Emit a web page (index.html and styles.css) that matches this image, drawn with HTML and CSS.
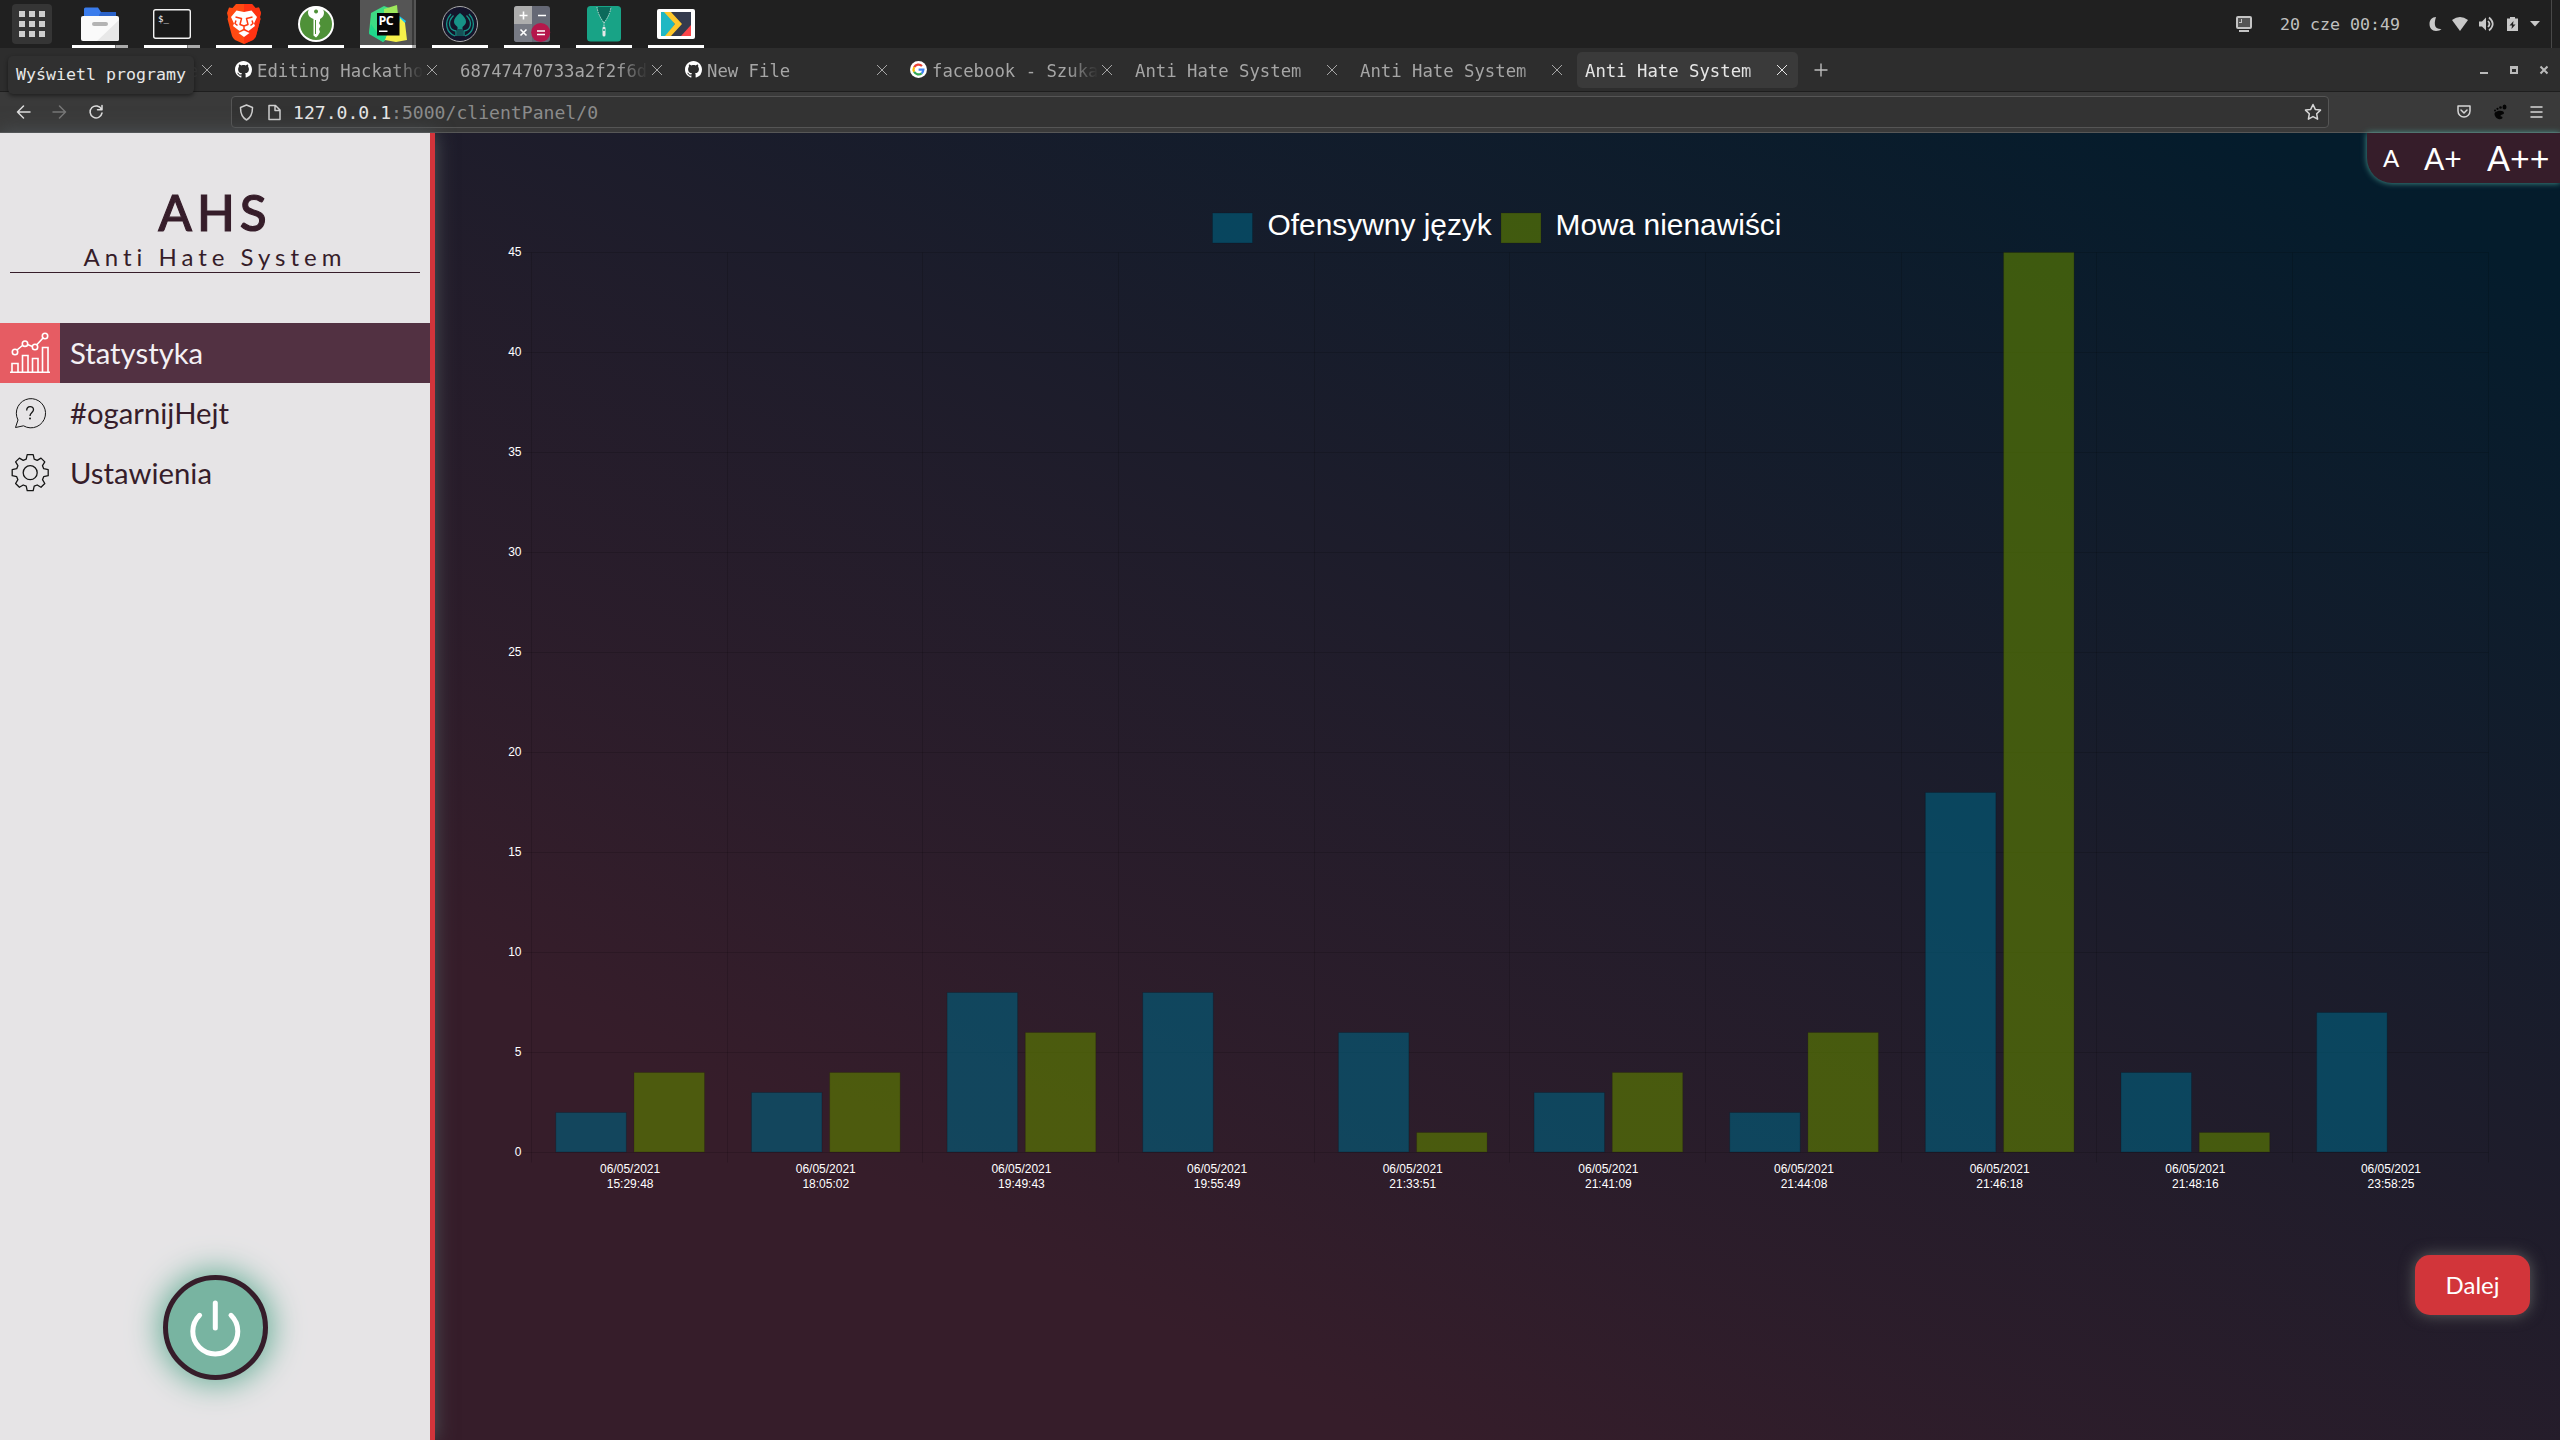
FILE: index.html
```html
<!DOCTYPE html>
<html lang="pl">
<head>
<meta charset="utf-8">
<title>Anti Hate System</title>
<link rel="stylesheet" href="styles.css">
</head>
<body>
<header class="panel">
  <div class="apps"><svg width="40" height="40" viewBox="0 0 40 40"><path fill="#cfcfcf" d="M7 7h6v6H7zM17 7h6v6h-6zM27 7h6v6h-6zM7 17h6v6H7zM17 17h6v6h-6zM27 17h6v6h-6zM7 27h6v6H7zM17 27h6v6h-6zM27 27h6v6h-6z"/></svg></div>
  <nav class="dock">
    <div class="dock-item multi"><svg viewBox="0 0 56 48"><path fill="#3a7cec" d="M12 18V9q0-1.500 1.500-1.500H26l3 4.500h13q2 0 2 2v4z"/><path fill="#2a62c8" d="M27 15l2-3h15v4H27z"/><rect x="9" y="16" width="38" height="25" rx="2" fill="#fafafa"/><path fill="#e8e8e8" d="M47 20v19q0 2-2 2H25z"/><rect x="20" y="22" width="16" height="4" rx="2" fill="#b4b4b4"/></svg></div>
    <div class="dock-item multi"><svg viewBox="0 0 56 48"><rect x="9.700" y="9.700" width="36.600" height="28.600" rx="2" fill="#191919" stroke="#f2f2f2" stroke-width="1.400"/><text x="14" y="21.500" class="prompt">$_</text></svg></div>
    <div class="dock-item"><svg viewBox="0 0 56 48"><path fill="#ff4a12" d="M20 4h16l3.500 4 3.500-.5L45 13l-1 4 .5 2-4.500 17q-1 2.500-3 4L28 44l-9-4q-2-1.500-3-4L11.500 19l.5-2-1-4 2-5.500 3.500.5z"/><path fill="#ff2a12" d="M28 4h8l3.500 4 3.500-.5L45 13l-1 4 .5 2-4.500 17q-1 2.500-3 4L28 44z" opacity=".7"/><path fill="#fff" d="M20.500 10.500L28 12l7.500-1.500L41 17l-3 6.500 1 2.500-6.500 5L28 28.500 23.500 31 17 26l1-2.500-3-6.500zM28 30.500l5.500 2.500-5.500 4-5.500-4z"/><path fill="none" stroke="#ff3c12" stroke-width="1.500" stroke-linejoin="round" d="M19.500 17l6 1.500L24 24.500l4 1.500 4-1.500-1.500-6 6-1.500M28 26v3M20 20.500l-1 3 2.500 2M36 20.500l1 3-2.500 2"/></svg></div>
    <div class="dock-item"><svg viewBox="0 0 56 48"><circle cx="28" cy="24" r="18" fill="#fff"/><circle cx="28" cy="24" r="16" fill="#4f9138"/><path fill="#fff" fill-rule="evenodd" d="M28 6.500c5 0 8 2.500 8 6.500 0 3-2 5-4 6v2l-1 2 1.500 3-1.500 3 1 3-2 3.500-2 2-2.500-2V19c-3-1-5.500-3-5.500-6 0-4 3-6.500 8-6.500zm0 3a2 2 0 1 0 .1 0z"/><path stroke="#4f9138" d="M27.500 20v14"/></svg></div>
    <div class="dock-item current"><svg viewBox="0 0 56 48"><path fill="#3ddc84" d="M11 13L24 6l8 3v26l-9 7-14-9z"/><path fill="#9ee85c" d="M24 9l13-4 1 10-14 8z"/><path fill="#16c8f0" d="M38 15l8 6-4 7-5-2z"/><path fill="#f5f04a" d="M40 18l5 5 2 17-11 2-11-2 3-8 10-3z"/><path fill="#1fd68b" d="M11 24l7 10 8 3-3 5-14-8z"/><rect x="17" y="13" width="22.500" height="22.500" fill="#060606"/><text x="18.500" y="25" class="pc">PC</text><path fill="#fff" d="M19 30.500h8.500V32H19z"/></svg></div>
    <div class="dock-item"><svg viewBox="0 0 56 48"><circle cx="28" cy="24" r="17.500" fill="#14142a" stroke="#a9a9a9"/><path fill="#179287" d="M28 13c4 3 6 6 6 8.500 0 1.500-.5 3-3.500 5.500V36h-1v-7h-1v7h-1v-7h-1v7h-1v-9c-3-2.500-3.500-4-3.500-5.500 0-2.500 2-5.500 6-8.500z"/><path fill="none" stroke="#179287" stroke-width="1.300" d="M19 14C11 23 15 33 23 36M21.500 15.500C15 22 17 30 24 31v5M37 14C45 23 41 33 33 36M34.500 15.500C41 22 39 30 32 31v5"/></svg></div>
    <div class="dock-item"><svg viewBox="0 0 56 48"><rect x="10" y="6" width="36" height="36" rx="3" fill="#656875"/><path fill="#adadad" d="M13 6h15v18H10V9q0-3 3-3z"/><path fill="#777a84" d="M10 24h18v18H13q-3 0-3-3z"/><circle cx="36.700" cy="32.500" r="9.500" fill="#b5174b"/><path stroke="#fff" stroke-width="1.600" d="M15.500 15.500h8M19.500 11.500v8M34 15.500h8M16.500 29.500l6 6M22.500 29.500l-6 6M33 31h8M33 34.500h8"/></svg></div>
    <div class="dock-item"><svg viewBox="0 0 56 48"><rect x="11" y="6" width="34" height="35.500" rx="3.500" fill="#18a386"/><path fill="#0c6a5a" d="M21 7h14q-1 8-7 15-6-7-7-15z"/><path fill="none" stroke="#c8d8d4" stroke-dasharray="1.500 1" d="M21 7q1 8 7 16 6-8 7-16M28 22v6"/><path stroke="#e8e8e8" stroke-width="3" stroke-linecap="round" d="M28 28v7"/><circle cx="28" cy="30" r="1" fill="#18a386"/></svg></div>
    <div class="dock-item"><svg viewBox="0 0 56 48"><rect x="9" y="9" width="38" height="30" rx="2" fill="#fff"/><path fill="#353b4d" d="M13 12h30v24H13z"/><path fill="#20b8c3" d="M13 12h5l9 12-9 12h-5z"/><path fill="#ffc72c" d="M16 12h7l11 12-11 12h-6l10-12z"/><path fill="#fb4549" d="M43 25v11H33z"/></svg></div>
  </nav>
  <div class="tray">
    <svg width="16" height="16" viewBox="0 0 16 16"><rect x="1" y="1" width="14" height="11" rx="1" fill="#555" stroke="#c4c4c4" stroke-width="2"/><path fill="#c4c4c4" d="M3 7V6h2V3h1v4zM3 14h10v2H3z"/></svg>
    <span class="clock">20 cze 00:49</span>
    <svg class="moon" width="13" height="16" viewBox="0 0 13 16"><path fill="#c8c8c8" d="M7 1C3 1 .5 4 .5 8S3 15 7 15c2.500 0 4.500-1 5.500-2C7 13.500 4 10 7 1z"/></svg>
    <svg class="wifi" width="16" height="16" viewBox="0 0 16 16"><path fill="#c8c8c8" d="M8 15L0 4q8-6 16 0z"/></svg>
    <svg class="volume" width="16" height="16" viewBox="0 0 16 16"><path fill="#c8c8c8" d="M0 5.500h3l4-4v13l-4-4H0z"/><path fill="none" stroke="#c8c8c8" stroke-width="1.700" d="M9 5q3 3 0 6M10 1.500q7.500 6.500 0 13"/></svg>
    <svg class="battery" width="11" height="16" viewBox="0 0 11 16"><path fill="#c8c8c8" d="M3 1h5v1.500h3V15H0V2.500h3z"/><path fill="#222" d="M6.500 5L2.500 9.500h2.500L4.500 13l4-4.500H6z"/></svg>
    <svg class="caret" width="10" height="6" viewBox="0 0 10 6"><path fill="#c8c8c8" d="M0 0h10L5 5.500z"/></svg>
    <i class="edge"></i>
  </div>
</header>

<div class="tabs">
  <div class="tab first"><span class="label">er</span><i class="x"></i></div>
  <div class="tab"><svg class="fav" width="17" height="17" viewBox="0 0 16 16"><use href="#github"/></svg><span class="label">Editing Hackathon</span><i class="x"></i></div>
  <div class="tab"><span class="label">68747470733a2f2f6d6</span><i class="x"></i></div>
  <div class="tab"><svg class="fav" width="17" height="17" viewBox="0 0 16 16"><path id="github" fill="#fff" d="M8 0C3.580 0 0 3.580 0 8c0 3.540 2.290 6.530 5.470 7.590.4.070.55-.17.55-.38 0-.19-.01-.82-.01-1.490-2.010.37-2.530-.49-2.690-.94-.09-.23-.48-.94-.82-1.130-.28-.15-.68-.52-.01-.53.63-.01 1.080.58 1.230.82.72 1.210 1.870.87 2.330.66.070-.52.28-.87.51-1.070-1.780-.2-3.640-.89-3.640-3.950 0-.87.31-1.590.82-2.150-.08-.2-.36-1.020.08-2.120 0 0 .67-.21 2.200.82.64-.18 1.320-.27 2-.27s1.360.09 2 .27c1.530-1.040 2.200-.82 2.200-.82.44 1.100.16 1.920.08 2.120.51.56.82 1.270.82 2.150 0 3.070-1.870 3.750-3.650 3.950.29.25.54.73.54 1.480 0 1.070-.01 1.930-.01 2.200 0 .21.15.46.55.38A8.010 8.010 0 0 0 16 8c0-4.420-3.580-8-8-8z"/></svg><span class="label">New File</span><i class="x"></i></div>
  <div class="tab"><svg class="fav" width="17" height="17" viewBox="0 0 17 17"><circle cx="8.500" cy="8.500" r="8.500" fill="#fff"/><g fill="none" stroke-width="2.200"><path stroke="#ea4335" d="M12 5A5 5 0 0 0 4.100 6.200"/><path stroke="#fbbc05" d="M4.100 6.200a5 5 0 0 0 0 4.600"/><path stroke="#34a853" d="M4.100 10.800a5 5 0 0 0 7.600 1.500"/><path stroke="#4285f4" d="M8.600 8.600h4.800a5 5 0 0 1-1.700 3.700"/></g></svg><span class="label">facebook - Szukaj</span><i class="x"></i></div>
  <div class="tab"><span class="label">Anti Hate System</span><i class="x"></i></div>
  <div class="tab"><span class="label">Anti Hate System</span><i class="x"></i></div>
  <div class="tab active"><span class="label">Anti Hate System</span><i class="x"></i></div>
  <svg class="plus" width="14" height="14" viewBox="0 0 14 14"><path stroke="#bdbdbd" stroke-width="1.400" d="M7 .5v13M.5 7h13"/></svg>
  <svg class="controls" width="68" height="10" viewBox="0 0 68 10"><path fill="#bababa" fill-rule="evenodd" d="M0 7h8v2H0zM30 1h8v8h-8zM32 4v3h4V4z"/><path stroke="#bababa" stroke-width="2" d="M60.500 1.500l7 7M67.500 1.500l-7 7"/></svg>
</div>
<div class="tooltip">Wyświetl programy</div>

<div class="toolbar">
  <svg class="history" width="90" height="16" viewBox="0 0 90 16"><g fill="none" stroke-width="1.500" stroke-linecap="round" stroke-linejoin="round"><path stroke="#dedede" d="M14 8H1.500M7.500 2L1.500 8l6 6"/><path stroke="#777" d="M37 8h12.500M43.500 2l6 6-6 6"/><path stroke="#dedede" d="M85.500 5.300A6 6 0 1 0 86 9M86 1.500v4.300h-4.500"/></g></svg>
  <div class="urlbar">
    <svg width="42" height="17" viewBox="0 0 42 17"><g fill="none" stroke="#cfcfcf" stroke-width="1.500" stroke-linejoin="round"><path d="M7.500 1l6 2.500c0 6-1.500 10-6 12.500-4.500-2.500-6-6.500-6-12.500z"/><path d="M30 1.500h6.500L41 6v9.500H30zM36 1.500V6.500h5"/></g></svg>
    <span class="url"><b>127.0.0.1</b>:5000/clientPanel/0</span>
    <svg class="star" width="18" height="18" viewBox="0 0 18 18"><path fill="none" stroke="#d6d6d6" stroke-width="1.500" stroke-linejoin="round" d="M9 1.500l2.300 4.900 5.200.7-3.800 3.700.9 5.400L9 13.600l-4.600 2.600.9-5.400L1.500 7.100l5.200-.7z"/></svg>
  </div>
  <svg class="actions" width="86" height="16" viewBox="0 0 86 16"><g fill="none" stroke="#d6d6d6" stroke-width="1.500" stroke-linecap="round" stroke-linejoin="round"><path d="M1 2h12v5a6 6 0 0 1-12 0zM4 6l3 3 3-3"/><path d="M74 3h11M74 8h11M74 13h11"/></g><g fill="#050505"><path d="M38 8.500c3-2.500 9-2 9 .5 0 2-3.500 1-3.500 3 0 1 2 0 2 1.500s-2 2-4 1.500c-3-.7-5-5-3.500-6.500z"/><ellipse cx="47.500" cy="3" rx="2" ry="2.500"/><circle cx="43.500" cy="3.500" r="1.300"/><circle cx="40.500" cy="4.800" r="1.100"/><circle cx="38" cy="6.500" r="1"/></g></svg>
</div>

<div class="page">
  <aside class="sidebar">
    <div class="brand"><h1>AHS</h1><p>Anti Hate System</p></div>
    <nav class="menu">
      <a class="entry selected"><svg width="60" height="60" viewBox="0 0 60 60"><g fill="none" stroke="#fff" stroke-width="1.600"><path d="M10 49.200h40M12 48.500v-8h6v8M22.500 48.500V32.500h5.500v16M32.500 48.500V35.500h5.500v13M42.500 48.500V24.500h5.500v24M17 27l6-5M27.500 21.500l5 2M36.500 22l7-7.500"/><circle cx="15" cy="29" r="2.700"/><circle cx="25" cy="20.700" r="2.700"/><circle cx="35" cy="24" r="2.700"/><circle cx="45" cy="13" r="2.700"/></g></svg><span>Statystyka</span></a>
      <a class="entry"><svg width="60" height="60" viewBox="0 0 60 60"><path fill="none" stroke="#161616" d="M15.500 44.500l2.500-7.500A14.600 14.600 0 1 1 23.500 42.800z"/><path fill="none" stroke="#161616" stroke-width="1.300" d="M26.700 27.500c0-5 6.800-5 6.800-.8 0 2.800-3.500 2.800-3.500 6.300"/><circle cx="30" cy="35.500" r="1" fill="#161616"/></svg><span>#ogarnijHejt</span></a>
      <a class="entry"><svg width="60" height="60" viewBox="0 0 60 60"><g transform="translate(30.200 29.700)" fill="none" stroke="#161616" stroke-width="1.300" stroke-linejoin="round"><circle r="7"/><path d="M-4-13.500L-3-18H3L4-13.500 7-12.300 10.800-14.600 14.600-10.800 12.300-7 13.500-4 18-3V3L13.500 4 12.300 7 14.600 10.800 10.800 14.600 7 12.300 4 13.500 3 18H-3L-4 13.500-7 12.300-10.800 14.600-14.600 10.800-12.300 7-13.500 4-18 3V-3L-13.500-4-12.300-7-14.600-10.800-10.800-14.600-7-12.300z"/></g></svg><span>Ustawienia</span></a>
    </nav>
    <div class="power"><svg width="60" height="70" viewBox="0 0 60 70"><path fill="none" stroke="#fff" stroke-width="5" stroke-linecap="round" d="M29.300 10v25M13.600 22.300a22.500 22.500 0 1 0 31.400 0"/></svg></div>
  </aside>
  <main class="content">
    <div class="sizes"><span class="s1">A</span><span class="s2">A+</span><span class="s3">A++</span></div>
    <svg class="chart" id="chart" width="2040" height="1020" viewBox="480 190 2040 1020"></svg>
    <button class="next">Dalej</button>
  </main>
</div>
<script src="chart.js"></script>
</body>
</html>
```
FILE: styles.css
```css
* { box-sizing: border-box; }
body {
  margin: 0;
  width: 2560px;
  height: 1440px;
  overflow: hidden;
  display: flex;
  flex-direction: column;
  background: #202020;
  font-family: Lato, sans-serif;
}
svg { display: block; flex: none; }

.panel, .tabs, .toolbar, .tooltip {
  font-family: "DejaVu Sans Mono", monospace;
  font-size: 17.3px;
  white-space: pre;
}
.panel { height: 48px; display: flex; align-items: center; background: #202020; }
.apps { margin: 0 20px 0 12px; border-radius: 4px; background: #353535; }
.dock { display: flex; gap: 16px; }
.dock-item { width: 56px; height: 48px; background: linear-gradient(#fff, #fff) 0 45px / 56px 3px no-repeat; }
.dock-item svg { width: 56px; height: 48px; }
.dock-item.multi { background: linear-gradient(90deg, #fff 43px, #777 43px 44px, #aaa 44px) 0 45px / 56px 3px no-repeat; }
.dock-item.current { background: linear-gradient(90deg, #fff 52px, #aaa 52px) 0 45px / 56px 3px no-repeat, linear-gradient(90deg, #555 52px, #393939 52px 54px, #555 54px); }
.prompt { font: 9px "DejaVu Sans Mono", monospace; fill: #fff; }
.pc { font: bold 12.5px "Open Sans", sans-serif; fill: #fff; letter-spacing: -.5px; }
.tray { margin-left: auto; height: 48px; display: flex; align-items: center; }
.clock { margin: 0 29px 0 28px; font-size: 16.6px; color: #c0c0c0; }
.wifi { margin-left: 10px; }
.volume { margin-left: 11px; }
.battery { margin-left: 12px; }
.caret { margin-left: 12px; }
.edge { width: 1px; height: 48px; margin: 0 8px 0 11px; background: #484848; }

.tabs { height: 44px; padding: 4px 12px 4px 2px; display: flex; align-items: center; background: #2d2d2d; border-bottom: 1px solid #1e1e1e; }
.tab { width: 221px; height: 36px; margin-right: 4px; padding: 0 11px 0 8px; border-radius: 5px; display: flex; align-items: center; color: #a6a6a6; }
.tab.active { background: #3a3a3a; color: #e6e6e6; }
.tab.first .label { padding-left: 178px; }
.fav { margin-right: 5px; }
.label { flex: 1; overflow: hidden; padding-top: 2px; line-height: 34px; -webkit-mask: linear-gradient(270deg, transparent 4px, #000 34px); mask: linear-gradient(270deg, transparent 4px, #000 34px); }
.x { width: 10px; height: 10px; background: linear-gradient(45deg, transparent 46%, currentColor 46% 54%, transparent 54%), linear-gradient(-45deg, transparent 46%, currentColor 46% 54%, transparent 54%); }
.plus { margin-left: 12px; }
.controls { margin-left: auto; }
.tooltip { position: absolute; left: 8px; top: 56px; width: 186px; height: 38px; border-radius: 5px; background: #303030; color: #e8e8e8; font-size: 16.6px; line-height: 38px; text-align: center; box-shadow: 0 2px 4px rgba(0, 0, 0, .45); z-index: 2; }

.toolbar { height: 41px; padding: 0 17px 0 16px; display: flex; align-items: center; background: #3a3a3a; border-bottom: 1px solid #575757; }
.urlbar { width: 2098px; height: 32px; margin-left: 125px; padding: 0 6px 0 7px; display: flex; align-items: center; border: 1px solid #555; border-radius: 4px; background: #333; }
.url { margin-left: 12px; padding-top: 1px; font-size: 18.1px; color: #8b8b8b; }
.url b { font-weight: 400; color: #e8e8e8; }
.star { margin-left: auto; }
.actions { margin-left: auto; }

.page { flex: 1; display: flex; background: linear-gradient(to top right, #361d2a 27%, #041c2c 94%); }
.sidebar { width: 435px; border-right: 5px solid #d2343b; display: flex; flex-direction: column; background: #e6e4e6; color: #361d2a; box-shadow: 0 0 18px #50565a; z-index: 1; }
.brand { margin: 54px 10px 0; height: 86px; border-bottom: 1px solid #361d2a; text-align: center; }
.brand h1 { margin: 0; font-size: 49.5px; line-height: 50px; font-weight: 500; letter-spacing: 5px; -webkit-text-stroke: 1.1px #361d2a; }
.brand p { margin: 0; padding-top: 4px; font-size: 24px; line-height: 32px; letter-spacing: 5px; }
.menu { margin-top: 50px; }
.entry { height: 60px; display: flex; align-items: center; font-size: 29.3px; }
.entry span { padding: 0 0 2px 10px; }
.selected { background: #523142; color: #f4f0f4; }
.selected svg { background: #e65c63; }
.power { width: 105px; height: 105px; margin: auto 0 60px 163px; border: 5px solid #361d2a; border-radius: 50%; display: flex; align-items: center; justify-content: center; background: #78b4a1; box-shadow: 0 0 30px 5px #6fb29c; }

.content { flex: 1; position: relative; padding: 57px 30px 0 45px; display: flex; flex-direction: column; }
.sizes { position: absolute; top: 0; right: 0; width: 193px; height: 50px; padding-left: 16px; border-radius: 0 0 0 25px; display: flex; align-items: center; background: #361d2a; color: #fff; line-height: 50px; box-shadow: 0 0 6px #4b9c93; }
.s1 { width: 41px; font-size: 24px; }
.s2 { width: 63px; font-size: 30px; }
.s3 { font-size: 34px; }
.next { align-self: flex-end; width: 115px; height: 60px; margin-top: 45px; padding-bottom: 3px; border: 0; border-radius: 15px; background: #d2353a; color: #fff; font: 24px Lato, sans-serif; box-shadow: 0 0 15px #606060; }

.chart text { font-family: "Liberation Sans", Arial, sans-serif; fill: #fff; }
.tick { font-size: 12px; }
.legend { font-size: 29.9px; }
.grid { stroke: rgba(0, 0, 0, .14); }
.blue { fill: rgba(1, 92, 122, .65); stroke: rgba(0, 20, 30, .25); }
.green { fill: rgba(91, 124, 0, .65); stroke: rgba(30, 30, 0, .25); }
```
FILE: chart.js
```js
const times = ['15:29:48', '18:05:02', '19:49:43', '19:55:49', '21:33:51', '21:41:09', '21:44:08', '21:46:18', '21:48:16', '23:58:25'];
const offensive = [2, 3, 8, 8, 6, 3, 2, 18, 4, 7];
const hate = [4, 4, 6, 0, 1, 4, 6, 45, 1, 0];
const left = 532, right = 2488.5, top0 = 252.5, bottom = 1152.5;
const step = (right - left) / times.length;
const unit = (bottom - top0) / 45;
let out = '';

const line = (x1, y1, x2, y2) => { out += `<line class="grid" x1="${x1}" y1="${y1}" x2="${x2}" y2="${y2}"/>`; };
const text = (cls, anchor, x, y, s) => { out += `<text class="${cls}" text-anchor="${anchor}" x="${x}" y="${y}">${s}</text>`; };
const bar = (cls, x, value) => {
  if (value) out += `<rect class="${cls}" x="${x}" y="${bottom - value * unit}" width="70.500" height="${value * unit - 0.5}"/>`;
};

for (let v = 0; v <= 45; v += 5) {
  const y = bottom - v * unit;
  line(left - 10, y, right, y);
  text('tick', 'end', 521.5, y + 3, v);
}
for (let i = 0; i <= times.length; i++) {
  const x = Math.round(left + i * step) - 0.5;
  line(x, top0, x, bottom + 10);
}
times.forEach((t, i) => {
  const x = left + i * step;
  bar('blue', x + 23.8, offensive[i]);
  bar('green', x + 102, hate[i]);
  text('tick', 'middle', x + step / 2 + 0.3, 1173, '06/05/2021');
  text('tick', 'middle', x + step / 2 + 0.3, 1188, t);
});
out += '<rect class="blue" x="1212.5" y="213" width="40" height="30"/><rect class="green" x="1501" y="213" width="40" height="30"/>';
text('legend', 'start', 1267.5, 235, 'Ofensywny język');
text('legend', 'start', 1555.5, 235, 'Mowa nienawiści');
document.getElementById('chart').innerHTML = out;
```
